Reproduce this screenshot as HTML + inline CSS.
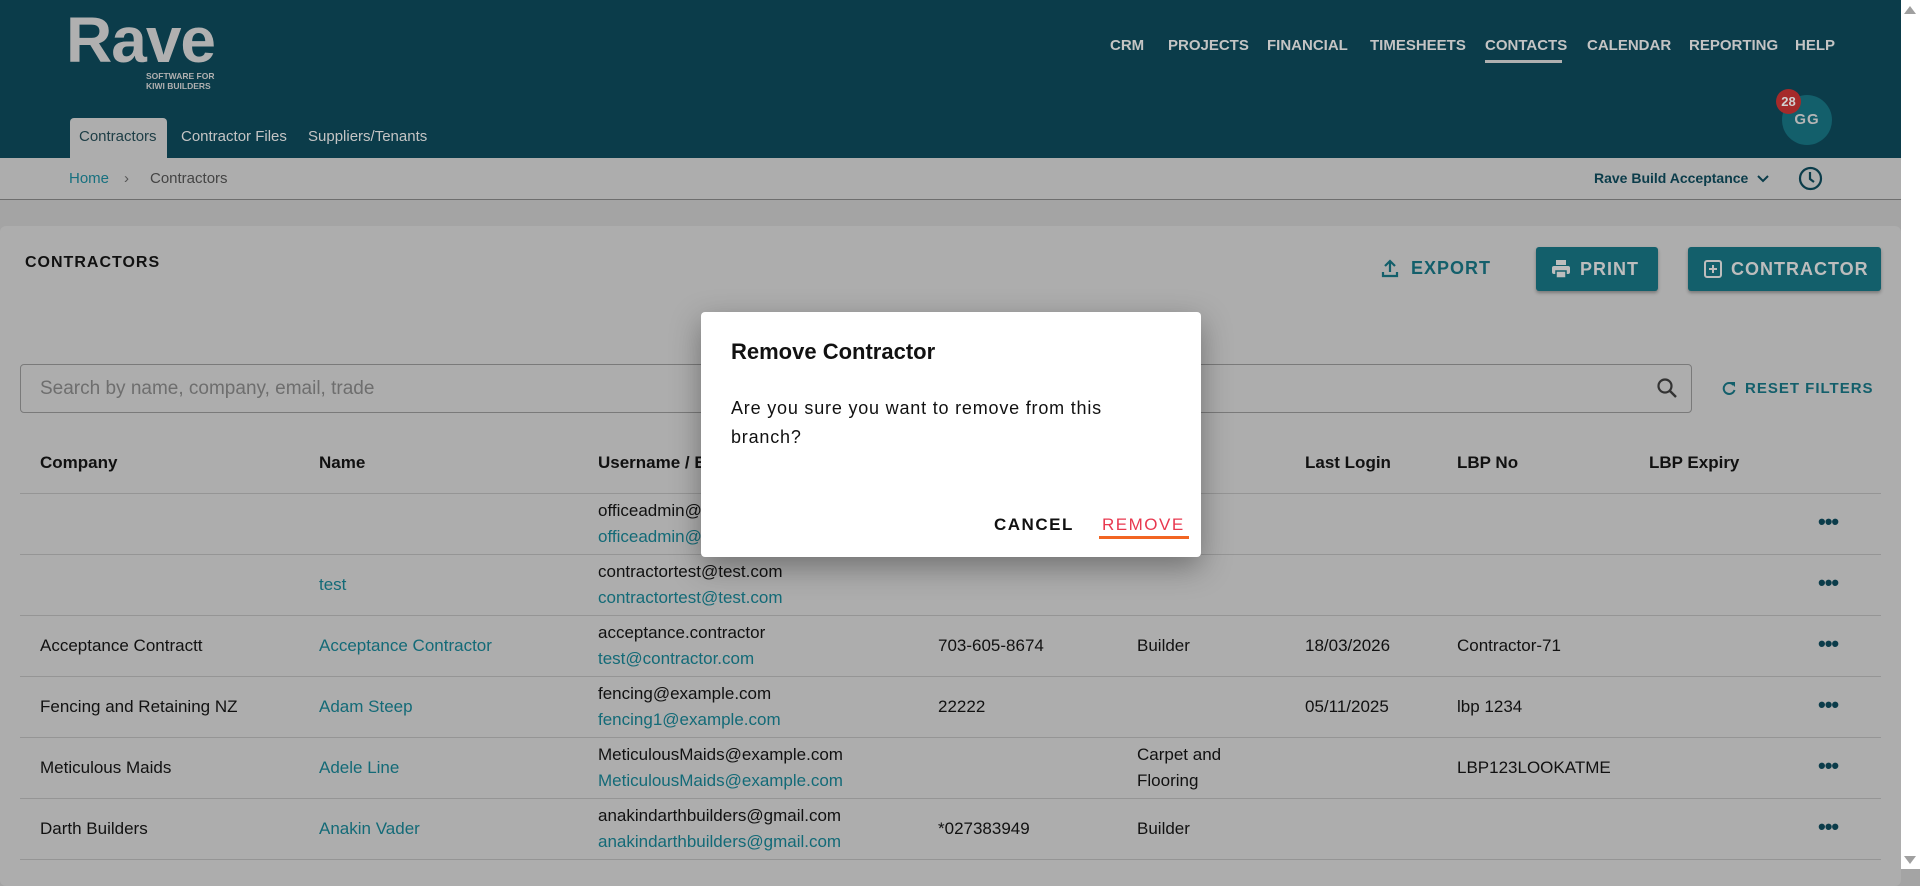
<!DOCTYPE html>
<html><head><meta charset="utf-8"><style>
*{box-sizing:border-box;margin:0;padding:0}
body{width:1920px;height:869px;overflow:hidden;background:#a4a4a4;font-family:"Liberation Sans",Arial,sans-serif;position:relative;color:#111}
.hdr{position:absolute;left:0;top:0;width:1901px;height:158px;background:#0b3c4a}
.abs{position:absolute;white-space:nowrap}
.nav{top:37px;font-size:15px;font-weight:bold;color:#c4c4c4}
.bc{position:absolute;left:0;top:158px;width:1901px;height:42px;background:#adadad;border-bottom:1px solid #6e6e6e}
.card{position:absolute;left:0;top:226px;width:1901px;height:660px;background:#adadad;border-radius:6px}
.t{font-size:17px;color:#111}
.l{font-size:17px;color:#136a77}
.line{position:absolute;left:20px;width:1861px;height:1px;background:#959595}
.dots{position:absolute;left:1818px;font-size:22px;font-weight:bold;color:#0b3c4a;letter-spacing:-1px}
.btn{position:absolute;top:247px;height:44px;background:#135f6b;border-radius:3px;color:#bdbdbd;font-weight:bold;font-size:18px;letter-spacing:1px;line-height:44px;box-shadow:0 2px 3px rgba(0,0,0,.3)}
.sb{position:absolute;left:1901px;top:0;width:19px;height:869px;background:#fff}
</style></head><body>
<div class="hdr"></div>
<div class="abs" style="left:66px;top:3px;font-size:64px;font-weight:bold;color:#b0b0b0;letter-spacing:-1px">Rave</div>
<div class="abs" style="left:146px;top:71px;font-size:8.5px;font-weight:bold;color:#b0b0b0;line-height:10px">SOFTWARE FOR<br>KIWI BUILDERS</div>
<div class="abs nav" style="left:1110px">CRM</div>
<div class="abs nav" style="left:1168px">PROJECTS</div>
<div class="abs nav" style="left:1267px">FINANCIAL</div>
<div class="abs nav" style="left:1370px">TIMESHEETS</div>
<div class="abs nav" style="left:1485px">CONTACTS</div>
<div class="abs" style="left:1485px;top:60px;width:77px;height:3px;background:#b0b0b0"></div>
<div class="abs nav" style="left:1587px">CALENDAR</div>
<div class="abs nav" style="left:1689px">REPORTING</div>
<div class="abs nav" style="left:1795px">HELP</div>
<div class="abs" style="left:70px;top:118px;width:97px;height:40px;background:#adadad;border-radius:4px 4px 0 0"></div>
<div class="abs" style="left:79px;top:128px;font-size:15px;color:#1d3d45">Contractors</div>
<div class="abs" style="left:181px;top:128px;font-size:15px;color:#c4c4c4">Contractor Files</div>
<div class="abs" style="left:308px;top:128px;font-size:15px;color:#c4c4c4">Suppliers/Tenants</div>
<div class="abs" style="left:1782px;top:95px;width:50px;height:50px;border-radius:50%;background:#135f6b;color:#b5b5b5;font-weight:bold;font-size:15px;text-align:center;line-height:50px;letter-spacing:1px">GG</div>
<div class="abs" style="left:1776px;top:89px;width:25px;height:25px;border-radius:50%;background:#a52a2a;color:#d0d0d0;font-weight:bold;font-size:13px;text-align:center;line-height:25px">28</div>
<div class="bc"></div>
<div class="abs" style="left:69px;top:170px;font-size:15px;color:#17707f">Home</div>
<div class="abs" style="left:124px;top:170px;font-size:15px;color:#555">›</div>
<div class="abs" style="left:150px;top:170px;font-size:15px;color:#444">Contractors</div>
<div class="abs" style="left:1594px;top:170px;font-size:14px;font-weight:bold;color:#0b3c4a">Rave Build Acceptance</div>
<svg class="abs" style="left:1756px;top:174px" width="14" height="10"><path d="M2 2l5 5 5-5" stroke="#0b3c4a" stroke-width="2" fill="none"/></svg>
<svg class="abs" style="left:1798px;top:166px" width="25" height="25"><circle cx="12.5" cy="12.5" r="10.5" stroke="#0b3c4a" stroke-width="2.2" fill="none"/><path d="M12 6v7l4 3" stroke="#0b3c4a" stroke-width="2.2" fill="none"/></svg>
<div class="card"></div>
<div class="abs" style="left:25px;top:254px;font-size:16px;font-weight:bold;letter-spacing:1px;color:#111">CONTRACTORS</div>
<svg class="abs" style="left:1381px;top:258px" width="18" height="20"><path d="M9 14V3M4 8l5-5 5 5M2 14v4h14v-4" stroke="#135f6b" stroke-width="2.2" fill="none"/></svg>
<div class="abs" style="left:1411px;top:258px;font-size:18px;font-weight:bold;letter-spacing:1px;color:#135f6b">EXPORT</div>
<div class="btn" style="left:1536px;width:122px"><svg style="position:absolute;left:15px;top:12px" width="20" height="20"><rect x="5" y="1" width="10" height="5" fill="#bdbdbd"/><rect x="1" y="7" width="18" height="8" rx="2" fill="#bdbdbd"/><rect x="5" y="12" width="10" height="7" fill="#bdbdbd" stroke="#135f6b" stroke-width="1.5"/></svg><span style="position:absolute;left:44px">PRINT</span></div>
<div class="btn" style="left:1688px;width:193px"><svg style="position:absolute;left:16px;top:13px" width="18" height="18"><rect x="1" y="1" width="16" height="16" rx="2" stroke="#bdbdbd" stroke-width="2" fill="none"/><path d="M9 5v8M5 9h8" stroke="#bdbdbd" stroke-width="2"/></svg><span style="position:absolute;left:43px">CONTRACTOR</span></div>
<div class="abs" style="left:20px;top:364px;width:1672px;height:49px;border:1px solid #7a7a7a;border-radius:4px"></div>
<div class="abs" style="left:40px;top:378px;font-size:19px;color:#6e6e6e">Search by name, company, email, trade</div>
<svg class="abs" style="left:1656px;top:377px" width="22" height="22"><circle cx="9" cy="9" r="6.5" stroke="#333" stroke-width="2.2" fill="none"/><path d="M14 14l6 6" stroke="#333" stroke-width="2.4"/></svg>
<svg class="abs" style="left:1722px;top:381px" width="14" height="14"><path d="M11.5 4A5.5 5.5 0 1 0 12.5 9" stroke="#135f6b" stroke-width="2" fill="none"/><path d="M8 1h5v5z" fill="#135f6b"/></svg>
<div class="abs" style="left:1745px;top:380px;font-size:15px;font-weight:bold;letter-spacing:1px;color:#135f6b">RESET FILTERS</div>
<div class="abs t" style="left:40px;top:453px;font-weight:bold">Company</div>
<div class="abs t" style="left:319px;top:453px;font-weight:bold">Name</div>
<div class="abs t" style="left:598px;top:453px;font-weight:bold">Username / Email</div>
<div class="abs t" style="left:1305px;top:453px;font-weight:bold">Last Login</div>
<div class="abs t" style="left:1457px;top:453px;font-weight:bold">LBP No</div>
<div class="abs t" style="left:1649px;top:453px;font-weight:bold">LBP Expiry</div>
<div class="line" style="top:493px"></div>
<div class="line" style="top:554px"></div>
<div class="line" style="top:615px"></div>
<div class="line" style="top:676px"></div>
<div class="line" style="top:737px"></div>
<div class="line" style="top:798px"></div>
<div class="line" style="top:859px"></div>
<div class="abs t" style="left:598px;top:501px">officeadmin@example.com</div><div class="abs l" style="left:598px;top:527px">officeadmin@example.com</div><div class="dots" style="top:509px">•••</div>
<div class="abs l" style="left:319px;top:575px">test</div>
<div class="abs t" style="left:598px;top:562px">contractortest@test.com</div><div class="abs l" style="left:598px;top:588px">contractortest@test.com</div><div class="dots" style="top:570px">•••</div>
<div class="abs t" style="left:40px;top:636px">Acceptance Contractt</div><div class="abs l" style="left:319px;top:636px">Acceptance Contractor</div>
<div class="abs t" style="left:598px;top:623px">acceptance.contractor</div><div class="abs l" style="left:598px;top:649px">test@contractor.com</div>
<div class="abs t" style="left:938px;top:636px">703-605-8674</div><div class="abs t" style="left:1137px;top:636px">Builder</div><div class="abs t" style="left:1305px;top:636px">18/03/2026</div><div class="abs t" style="left:1457px;top:636px">Contractor-71</div><div class="dots" style="top:631px">•••</div>
<div class="abs t" style="left:40px;top:697px">Fencing and Retaining NZ</div><div class="abs l" style="left:319px;top:697px">Adam Steep</div>
<div class="abs t" style="left:598px;top:684px">fencing@example.com</div><div class="abs l" style="left:598px;top:710px">fencing1@example.com</div>
<div class="abs t" style="left:938px;top:697px">22222</div><div class="abs t" style="left:1305px;top:697px">05/11/2025</div><div class="abs t" style="left:1457px;top:697px">lbp 1234</div><div class="dots" style="top:692px">•••</div>
<div class="abs t" style="left:40px;top:758px">Meticulous Maids</div><div class="abs l" style="left:319px;top:758px">Adele Line</div>
<div class="abs t" style="left:598px;top:745px">MeticulousMaids@example.com</div><div class="abs l" style="left:598px;top:771px">MeticulousMaids@example.com</div>
<div class="abs t" style="left:1137px;top:745px">Carpet and</div><div class="abs t" style="left:1137px;top:771px">Flooring</div><div class="abs t" style="left:1457px;top:758px">LBP123LOOKATME</div><div class="dots" style="top:753px">•••</div>
<div class="abs t" style="left:40px;top:819px">Darth Builders</div><div class="abs l" style="left:319px;top:819px">Anakin Vader</div>
<div class="abs t" style="left:598px;top:806px">anakindarthbuilders@gmail.com</div><div class="abs l" style="left:598px;top:832px">anakindarthbuilders@gmail.com</div>
<div class="abs t" style="left:938px;top:819px">*027383949</div><div class="abs t" style="left:1137px;top:819px">Builder</div><div class="dots" style="top:814px">•••</div>
<div class="abs" style="left:701px;top:312px;width:500px;height:245px;background:#fff;border-radius:4px;box-shadow:0 10px 30px rgba(0,0,0,.35)"></div>
<div class="abs" style="left:731px;top:339px;font-size:22px;font-weight:bold;color:#111">Remove Contractor</div>
<div class="abs" style="left:731px;top:394px;font-size:18px;line-height:29px;color:#111;letter-spacing:.8px">Are you sure you want to remove from this<br>branch?</div>
<div class="abs" style="left:994px;top:515px;font-size:17px;font-weight:bold;letter-spacing:1.5px;color:#111">CANCEL</div>
<div class="abs" style="left:1102px;top:515px;font-size:17px;letter-spacing:1.5px;color:#e8384f">REMOVE</div>
<div class="abs" style="left:1099px;top:536px;width:90px;height:3px;background:#f26522"></div>
<div class="sb"></div>
<svg class="abs" style="left:1904px;top:6px" width="12" height="8"><path d="M0 8L6 0l6 8z" fill="#a0a0a0"/></svg>
<svg class="abs" style="left:1904px;top:856px" width="12" height="8"><path d="M0 0l6 8 6-8z" fill="#a0a0a0"/></svg>
</body></html>
